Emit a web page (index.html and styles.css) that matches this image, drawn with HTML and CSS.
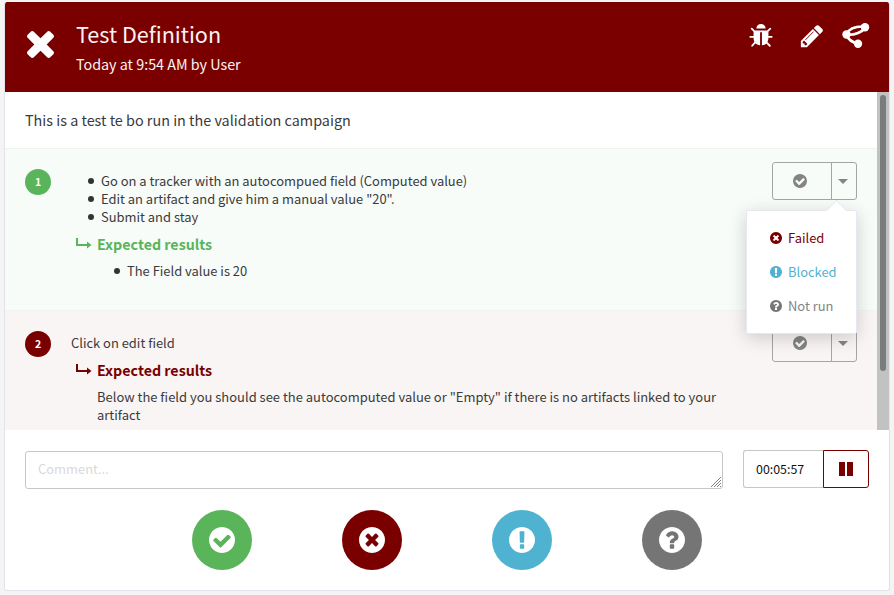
FILE: index.html
```
<!DOCTYPE html>
<html lang="en">
<head>
<meta charset="utf-8">
<title>Test Definition</title>
<link rel="stylesheet" href="styles.css">
</head>
<body>
<svg class="sprite" aria-hidden="true">
  <symbol id="check" viewBox="128 128 1536 1536"><path d="M1412 734q0-28-18-46l-91-90q-19-19-45-19t-45 19l-408 407-226-226q-19-19-45-19t-45 19l-91 90q-18 18-18 46 0 27 18 45l362 362q19 19 45 19 27 0 46-19l543-543q18-18 18-45zm252 162q0 209-103 385.500t-279.500 279.500-385.500 103-385.500-103-279.500-279.500-103-385.500 103-385.500 279.500-279.500 385.500-103 385.500 103 279.500 279.500 103 385.500z"/></symbol>
  <symbol id="cross" viewBox="128 128 1536 1536"><path d="M1277 1122q0-26-19-45l-181-181 181-181q19-19 19-45 0-27-19-46l-90-90q-19-19-46-19-26 0-45 19l-181 181-181-181q-19-19-45-19-27 0-46 19l-90 90q-19 19-19 46 0 26 19 45l181 181-181 181q-19 19-19 45 0 27 19 46l90 90q19 19 46 19 26 0 45-19l181-181 181 181q19 19 45 19 27 0 46-19l90-90q19-19 19-46zm387-226q0 209-103 385.500t-279.500 279.500-385.500 103-385.500-103-279.500-279.500-103-385.500 103-385.500 279.500-279.500 385.500-103 385.500 103 279.500 279.500 103 385.500z"/></symbol>
  <symbol id="exclamation" viewBox="128 128 1536 1536"><path d="M896 128q209 0 385.500 103t279.500 279.500 103 385.500-103 385.500-279.500 279.500-385.500 103-385.500-103-279.500-279.500-103-385.500 103-385.500 279.500-279.500 385.500-103zm128 1247v-190q0-14-9-23.500t-22-9.500h-192q-13 0-23 10t-10 23v190q0 13 10 23t23 10h192q13 0 22-9.500t9-23.500zm-2-344l18-621q0-12-10-18-10-8-24-8h-220q-14 0-24 8-10 6-10 18l17 621q0 10 10 17.500t24 7.500h185q14 0 23.500-7.500t10.500-17.500z"/></symbol>
  <symbol id="question" viewBox="128 128 1536 1536"><path d="M1024 1376v-192q0-14-9-23t-23-9h-192q-14 0-23 9t-9 23v192q0 14 9 23t23 9h192q14 0 23-9t9-23zm256-672q0-88-55.500-163t-138.500-116-170-41q-243 0-371 213-15 24 8 42l132 100q7 6 19 6 16 0 25-12 53-68 86-92 34-24 86-24 48 0 85.500 26t37.500 59q0 38-20 61t-68 45q-63 28-115.500 86.500t-52.500 125.500v36q0 14 9 23t23 9h192q14 0 23-9t9-23q0-19 21.500-49.500t54.500-49.500q32-18 49-28.500t46-35 44.500-48 28-60.500 12.500-81zm384 192q0 209-103 385.500t-279.500 279.500-385.500 103-385.500-103-279.500-279.500-103-385.500 103-385.500 279.500-279.500 385.500-103 385.500 103 279.500 279.500 103 385.500z"/></symbol>
  <symbol id="arrow" viewBox="0 0 16 12"><path d="M0 0h2v6h9V3.500L15.500 7 11 10.500V8H0z"/></symbol>
</svg>

<main class="card">
  <header class="header">
    <svg class="status" viewBox="302 366 1188 1188"><path d="M1490 1322q0 40-28 68l-136 136q-28 28-68 28t-68-28l-294-294-294 294q-28 28-68 28t-68-28l-136-136q-28-28-28-68t28-68l294-294-294-294q-28-28-28-68t28-68l136-136q28-28 68-28t68 28l294 294 294-294q28-28 68-28t68 28l136 136q28 28 28 68t-28 68l-294 294 294 294q28 28 28 68z"/></svg>
    <div class="heading">
      <h1 class="title">Test Definition</h1>
      <p class="meta">Today at 9:54 AM by User</p>
    </div>
    <nav class="actions">
      <svg class="bug" viewBox="0 0 1792 1792"><path d="M1696 960q0 26-19 45t-45 19h-224q0 171-67 290l208 209q19 19 19 45t-19 45q-18 19-45 19t-45-19l-198-197q-5 5-15 13t-42 28.500-65 36.500-82 29-97 13v-896h-128v896q-51 0-101.500-13.500t-87-33-66-39-43.500-32.500l-15-14-183 207q-20 21-48 21-24 0-43-16-19-18-20.500-44.500t15.500-46.500l202-227q-58-114-58-274h-224q-26 0-45-19t-19-45 19-45 45-19h224v-294l-173-173q-19-19-19-45t19-45 45-19 45 19l173 173h844l173-173q19-19 45-19t45 19 19 45-19 45l-173 173v294h224q26 0 45 19t19 45zm-480-576h-640q0-133 93.500-226.500t226.500-93.500 226.500 93.500 93.500 226.500z"/></svg>
      <svg class="pencil" viewBox="0 0 1792 1792"><path d="M491 1536l91-91-235-235-91 91v107h128v128h107zm523-928q0-22-22-22-10 0-17 7l-542 542q-7 7-7 17 0 22 22 22 10 0 17-7l542-542q7-7 7-17zm-54-192l416 416-832 832h-416v-416zm683 96q0 53-37 90l-166 166-416-416 166-165q36-38 90-38 53 0 91 38l235 234q37 39 37 91z"/></svg>
      <svg class="graph" viewBox="0 0 28 26"><g fill="none" stroke="#fff" stroke-width="2.600"><path d="M4.500 11C7 5.500 14 3 23 3.500M4.500 11.500C12 12.500 20 9.500 23 4.500M4.500 11.500Q7 19 16 20.500"/></g><circle cx="4.500" cy="11.500" r="4.200"/><circle cx="23" cy="4.300" r="4.200"/><circle cx="16" cy="20.800" r="4.200"/></svg>
    </nav>
  </header>

  <div class="scroller">
    <div class="content">
      <p class="description">This is a test te bo run in the validation campaign</p>
      <section class="step passed">
        <span class="number">1</span>
        <div class="body">
          <ul class="list">
            <li>Go on a tracker with an autocompued field (Computed value)</li>
            <li>Edit an artifact and give him a manual value "20".</li>
            <li>Submit and stay</li>
          </ul>
          <h2 class="expected"><svg><use href="#arrow"/></svg>Expected results</h2>
          <ul class="list nested"><li>The Field value is 20</li></ul>
        </div>
        <div class="split">
          <button class="main"><svg><use href="#check"/></svg></button>
          <button class="toggle"><i class="caret"></i></button>
          <div class="menu">
            <a class="item red"><svg><use href="#cross"/></svg>Failed</a>
            <a class="item blue"><svg><use href="#exclamation"/></svg>Blocked</a>
            <a class="item gray"><svg><use href="#question"/></svg>Not run</a>
          </div>
        </div>
      </section>
      <section class="step failed">
        <span class="number">2</span>
        <div class="body">
          <p class="text">Click on edit field</p>
          <h2 class="expected"><svg><use href="#arrow"/></svg>Expected results</h2>
          <p class="result">Below the field you should see the autocomputed value or "Empty" if there is no artifacts linked to your artifact</p>
        </div>
        <div class="split">
          <button class="main"><svg><use href="#check"/></svg></button>
          <button class="toggle"><i class="caret"></i></button>
        </div>
      </section>
    </div>
    <div class="track"><div class="thumb"></div></div>
  </div>

  <footer class="footer">
    <div class="row">
      <div class="comment"><span>Comment...</span>
        <svg class="grip" viewBox="0 0 12 12"><path d="M1 11L11 1M4 11l7-7M7 11l4-4M10 11l1-1"/></svg>
      </div>
      <div class="timer"><span class="time">00:05:57</span><button class="pause"><i></i><i></i></button></div>
    </div>
    <div class="verdicts">
      <button class="verdict bg-green"><svg><use href="#check"/></svg></button>
      <button class="verdict bg-red"><svg><use href="#cross"/></svg></button>
      <button class="verdict bg-blue"><svg><use href="#exclamation"/></svg></button>
      <button class="verdict bg-gray"><svg><use href="#question"/></svg></button>
    </div>
  </footer>
</main>
</body>
</html>
```
FILE: styles.css
```
* { box-sizing: border-box; }
body {
  margin: 0;
  padding: 2px 4px 0;
  height: 595px;
  overflow: hidden;
  background: #f4f4f5;
  color: #3a3a3a;
  font: 12.930px/18px "Noto Sans CJK SC", "Open Sans", sans-serif;
}
h1, h2, p, ul { margin: 0; padding: 0; font-weight: 400; }
svg { display: block; fill: currentColor; flex: none; }
button { margin: 0; padding: 0; font: inherit; }
.sprite { position: absolute; width: 0; height: 0; }
.card {
  height: 589px;
  background: #fff;
  border: solid #e1e2ea;
  border-width: 0 1px 1px;
  border-radius: 3px;
  overflow: hidden;
}
.header {
  display: flex;
  height: 90px;
  padding-left: 22px;
  background: #7a0000;
  color: #fff;
}
.status { width: 27px; height: 27px; margin-top: 29px; }
.heading { flex: 1; padding: 16px 0 0 22px; }
.title { font-size: 21.600px; line-height: 32px; color: #fbf3f3; }
.meta { font-size: 14.320px; line-height: 20px; margin-top: 4px; color: #fbf3f3; }
.actions { display: flex; align-items: flex-start; padding: 20px 19px 0 0; }
.bug { width: 26px; height: 26px; margin: 1px 0 0 -1px; }
.pencil { width: 26px; height: 26px; margin: 1px 0 0 25px; }
.graph { width: 28px; height: 26px; margin: 1px 0 0 17px; }
.scroller { display: flex; height: 338px; overflow: hidden; }
.content { flex: 1; min-width: 0; }
.description {
  height: 56px;
  padding: 18px 20px;
  font-size: 14.380px;
  line-height: 20px;
}
.step {
  display: flex;
  align-items: flex-start;
  height: 162px;
  padding: 14px 20px 0;
  border-top: 1px solid #eef2f0;
}
.passed { --tone: #5ab45a; background: #f7fcf9; }
.failed { --tone: #7a0000; background: #f9f5f4; border-color: #f4f3f1; }
.number {
  width: 26px;
  height: 26px;
  margin-top: 6px;
  border-radius: 50%;
  background: var(--tone);
  color: #fff;
  font: 700 10.500px/25px "Noto Sans CJK SC", sans-serif;
  text-align: center;
}
.body { flex: 1; padding: 9px 36px 0 20px; }
.list { list-style: none; padding-left: 30px; }
.list li { position: relative; }
.list li::before {
  content: "";
  position: absolute;
  left: -13px;
  top: 6px;
  width: 6px;
  height: 6px;
  border-radius: 50%;
  background: #333;
}
.nested { padding-left: 56px; }
.expected {
  display: flex;
  align-items: center;
  gap: 5px;
  margin: 8px 0 8px 5px;
  color: var(--tone);
  font-size: 14.250px;
  line-height: 20px;
  font-weight: 700;
}
.expected svg { width: 16px; height: 12px; }
.result { padding-left: 26px; font-size: 12.970px; }
.split { position: relative; display: flex; width: 85px; height: 38px; margin-top: -1px; }
.main, .toggle {
  display: flex;
  align-items: center;
  justify-content: center;
  border: 1px solid #a3a6a5;
  background: transparent;
  color: #848484;
}
.main { width: 60px; padding: 0 4px 1px 0; border-radius: 3px 0 0 3px; }
.main svg { width: 14px; height: 14px; }
.toggle { width: 26px; margin-left: -1px; padding: 0 2px 0 0; border-radius: 0 3px 3px 0; }
.caret { border: solid transparent; border-width: 5px 5px 0; border-top-color: #848484; }
.menu {
  position: absolute;
  z-index: 2;
  top: 48px;
  right: 0;
  width: 111px;
  height: 124px;
  padding: 10px 0 0 23px;
  background: #fff;
  border: 1px solid #e7e8ef;
  border-radius: 2px;
  box-shadow: 0 4px 18px rgba(0, 0, 0, .18);
}
.menu::before {
  content: "";
  position: absolute;
  top: -8px;
  right: 12px;
  width: 14px;
  height: 14px;
  background: #fff;
  border: solid #e7e8ef;
  border-width: 1px 0 0 1px;
  transform: rotate(45deg);
}
.item { display: flex; align-items: center; gap: 6px; height: 34px; }
.item svg { width: 12px; height: 12px; }
.red { color: #7a0000; }
.blue { color: #4fb2d1; }
.gray { color: #848484; }
.gray svg { color: #777; }
.track { width: 12px; padding: 3px 3px 0; background: #c1c3c2; }
.thumb { height: 276px; border-radius: 3px; background: #797d7d; }
.row { display: flex; align-items: flex-start; gap: 20px; padding: 20px 20px 0; }
.comment {
  position: relative;
  flex: 1;
  height: 38px;
  margin-top: 1px;
  padding: 8px 12px;
  border: 1px solid #c7c7c7;
  border-radius: 3px;
  color: #d9d9d9;
}
.grip {
  position: absolute;
  right: 0;
  bottom: 0;
  width: 12px;
  height: 12px;
  fill: none;
  stroke: #777;
  stroke-width: .9;
}
.timer { display: flex; width: 126px; height: 38px; }
.time {
  flex: 1;
  padding-left: 12px;
  border: 1px solid #c7c7c7;
  border-right: 0;
  border-radius: 3px 0 0 3px;
  color: #111;
  font-size: 12.400px;
  line-height: 36px;
}
.pause {
  display: flex;
  align-items: center;
  justify-content: center;
  gap: 2px;
  width: 46px;
  border: 1px solid #7a0000;
  border-radius: 0 3px 3px 0;
  background: #fff;
}
.pause i { width: 6px; height: 14px; background: #7a0000; }
.verdicts { display: flex; justify-content: center; gap: 90px; margin-top: 21px; }
.verdict {
  display: flex;
  align-items: center;
  justify-content: center;
  width: 60px;
  height: 60px;
  border: 0;
  border-radius: 50%;
  color: #fff;
}
.verdict svg { width: 26px; height: 26px; }
.bg-green { background: #5ab45a; }
.bg-red { background: #7a0000; }
.bg-blue { background: #4fb2d1; }
.bg-gray { background: #757575; }
```
